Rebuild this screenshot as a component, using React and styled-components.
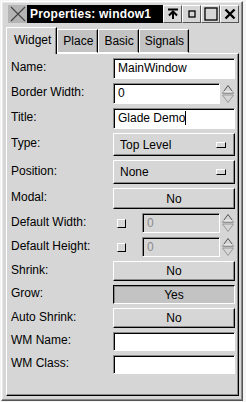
import React from "react";
import styled, { createGlobalStyle, css } from "styled-components";

const Global = createGlobalStyle`
  html, body { margin: 0; padding: 0; background: #f4f4f4; }
  body { font-family: "Liberation Sans", Arial, sans-serif; font-size: 12px; color: #000; }
`;

const Frame = styled.div`
  box-sizing: border-box;
  width: 242px;
  height: 400px;
  margin: 1px 0 0 1px;
  background: #d6d6d6;
  border: 1px solid #fff;
  border-right-color: #555;
  border-bottom-color: #555;
  box-shadow: inset -1px -1px 0 #8a8a8a, inset 1px 1px 0 #e8e8e8;
  padding: 3px 3px 4px 4px;
  display: flex;
  flex-direction: column;
`;

const TitleBar = styled.div`
  display: flex;
  height: 18px;
  margin-left: 2px;
`;

const CloseBox = styled.div`
  width: 19px;
  height: 18px;
  background: #b4b4b4;
  display: flex;
  align-items: center;
  justify-content: center;
`;

const TitleText = styled.div`
  flex: 1;
  background: #000;
  color: #fff;
  font-weight: bold;
  font-size: 12px;
  letter-spacing: 0.2px;
  line-height: 18px;
  padding-left: 3px;
  white-space: nowrap;
  overflow: hidden;
`;

const WinButton = styled.div`
  box-sizing: border-box;
  width: 19px;
  height: 18px;
  background: #d6d6d6;
  border: 1px solid #fff;
  border-right-color: #555;
  border-bottom-color: #555;
  display: flex;
  align-items: center;
  justify-content: center;
`;

const Notebook = styled.div`
  display: flex;
  flex-direction: column;
  flex: 1;
  margin-top: 4px;
`;

const Tabs = styled.div`
  display: flex;
  align-items: flex-end;
  height: 26px;
  position: relative;
  z-index: 1;
`;

const Tab = styled.div`
  box-sizing: border-box;
  height: ${(p) => (p.$active ? "27px" : "24px")};
  padding: 0 4px 0 5px;
  line-height: ${(p) => (p.$active ? "24px" : "22px")};
  font-size: 12px;
  background: ${(p) => (p.$active ? "#d6d6d6" : "#c3c3c3")};
  border-top: 1px solid #fff;
  border-left: 1px solid #fff;
  border-right: 1px solid #000;
  box-shadow: inset -1px 0 0 #8a8a8a;
  ${(p) =>
    p.$active
      ? css`
          margin-bottom: -1px;
          padding: 0 5px 0 7px;
        `
      : css`
          border-bottom: 1px solid #fff;
        `}
`;

const Panel = styled.div`
  box-sizing: border-box;
  flex: 1;
  background: #d6d6d6;
  border: 1px solid #fff;
  border-right-color: #000;
  border-bottom-color: #000;
  box-shadow: inset -1px -1px 0 #8a8a8a;
  padding: 4px 3px 0 4px;
`;

const Grid = styled.div`
  display: grid;
  grid-template-columns: 102px 1fr;
  row-gap: 4px;
  align-items: center;
`;

const Label = styled.div`
  font-size: 12px;
  line-height: 14px;
  white-space: nowrap;
  padding-bottom: 3px;
`;

const sunken = css`
  box-sizing: border-box;
  border: 1px solid #8a8a8a;
  border-right-color: #fff;
  border-bottom-color: #fff;
  box-shadow: inset 1px 1px 0 #000;
`;

const Entry = styled.div`
  ${sunken};
  height: ${(p) => p.$h || 21}px;
  background: ${(p) => (p.$disabled ? "#d6d6d6" : "#fff")};
  color: ${(p) => (p.$disabled ? "#8a8a8a" : "#000")};
  padding: 0 4px;
  line-height: ${(p) => (p.$h || 21) - 2}px;
  font-size: 12px;
  flex: 1;
  white-space: nowrap;
  overflow: hidden;
`;

const Caret = styled.span`
  display: inline-block;
  width: 1px;
  height: 14px;
  background: #000;
  vertical-align: -3px;
`;

const Button = styled.div`
  box-sizing: border-box;
  height: ${(p) => p.$h || 20}px;
  background: ${(p) => (p.$pressed ? "#c3c3c3" : "#d6d6d6")};
  border: 1px solid ${(p) => (p.$pressed ? "#000" : "#fff")};
  border-right-color: ${(p) => (p.$pressed ? "#fff" : "#000")};
  border-bottom-color: ${(p) => (p.$pressed ? "#fff" : "#000")};
  box-shadow: ${(p) =>
    p.$pressed ? "inset 1px 1px 0 #8a8a8a" : "inset -1px -1px 0 #8a8a8a"};
  display: flex;
  align-items: center;
  justify-content: ${(p) => (p.$menu ? "space-between" : "center")};
  padding: ${(p) => (p.$menu ? "0 8px 0 6px" : "0")};
  font-size: 12px;
`;

const MenuIndicator = styled.div`
  box-sizing: border-box;
  width: 10px;
  height: 6px;
  border: 1px solid #fff;
  border-right-color: #000;
  border-bottom-color: #000;
  background: #d6d6d6;
`;

const SpinRow = styled.div`
  display: flex;
  align-items: center;
  gap: 1px;
`;

const Check = styled.div`
  box-sizing: border-box;
  width: 9px;
  height: 9px;
  margin: 0 15px 0 4px;
  background: #d6d6d6;
  border: 1px solid #fff;
  border-right-color: #000;
  border-bottom-color: #000;
`;

const Spin = () => (
  <svg width="14" height="20" viewBox="0 0 14 20">
    <path d="M7 1.5 L12.5 9 L1.5 9 Z" fill="#d6d6d6" stroke="#555" strokeWidth="1" />
    <path d="M1.5 8 L12.5 8" stroke="#fff" />
    <path d="M1.5 11 L12.5 11 L7 18.5 Z" fill="#d6d6d6" stroke="#9a9a9a" strokeWidth="1" />
  </svg>
);

const XIcon = () => (
  <svg width="16" height="16" viewBox="0 0 16 16">
    <path d="M1 1 L15 15 M15 1 L1 15" stroke="#444" strokeWidth="1.2" />
  </svg>
);

export default function App() {
  return (
    <>
      <Global />
      <Frame>
        <TitleBar>
          <CloseBox>
            <XIcon />
          </CloseBox>
          <TitleText>Properties: window1</TitleText>
          <WinButton>
            <svg width="12" height="12" viewBox="0 0 12 12">
              <path d="M1 1.5 H11" stroke="#000" strokeWidth="2" />
              <path d="M6 11 V4" stroke="#000" strokeWidth="2" />
              <path d="M2 7.5 L6 3.5 L10 7.5" stroke="#000" strokeWidth="2" fill="none" />
            </svg>
          </WinButton>
          <WinButton>
            <svg width="8" height="8" viewBox="0 0 8 8">
              <rect x="1" y="1" width="6" height="6" fill="none" stroke="#000" strokeWidth="1.3" />
            </svg>
          </WinButton>
          <WinButton>
            <svg width="14" height="14" viewBox="0 0 14 14">
              <rect x="1" y="1" width="12" height="12" fill="none" stroke="#000" strokeWidth="1.3" />
            </svg>
          </WinButton>
          <WinButton>
            <svg width="12" height="12" viewBox="0 0 12 12">
              <path d="M1.5 1.5 L10.5 10.5 M10.5 1.5 L1.5 10.5" stroke="#000" strokeWidth="2.4" />
            </svg>
          </WinButton>
        </TitleBar>
        <Notebook>
          <Tabs>
            <Tab $active>Widget</Tab>
            <Tab>Place</Tab>
            <Tab>Basic</Tab>
            <Tab>Signals</Tab>
          </Tabs>
          <Panel>
            <Grid>
              <Label>Name:</Label>
              <Entry>MainWindow</Entry>

              <Label>Border Width:</Label>
              <SpinRow>
                <Entry>0</Entry>
                <Spin />
              </SpinRow>

              <Label>Title:</Label>
              <Entry>
                Glade Demo
                <Caret />
              </Entry>

              <Label>Type:</Label>
              <Button $menu $h={23}>
                <span>Top Level</span>
                <MenuIndicator />
              </Button>

              <Label>Position:</Label>
              <Button $menu $h={24}>
                <span>None</span>
                <MenuIndicator />
              </Button>

              <Label>Modal:</Label>
              <Button $h={21}>No</Button>

              <Label>Default Width:</Label>
              <SpinRow>
                <Check />
                <Entry $disabled $h={20}>0</Entry>
                <Spin />
              </SpinRow>

              <Label>Default Height:</Label>
              <SpinRow>
                <Check />
                <Entry $disabled $h={20}>0</Entry>
                <Spin />
              </SpinRow>

              <Label>Shrink:</Label>
              <Button>No</Button>

              <Label>Grow:</Label>
              <Button $pressed $h={19}>Yes</Button>

              <Label>Auto Shrink:</Label>
              <Button>No</Button>

              <Label>WM Name:</Label>
              <Entry $h={19} />

              <Label>WM Class:</Label>
              <Entry $h={19} />
            </Grid>
          </Panel>
        </Notebook>
      </Frame>
    </>
  );
}
